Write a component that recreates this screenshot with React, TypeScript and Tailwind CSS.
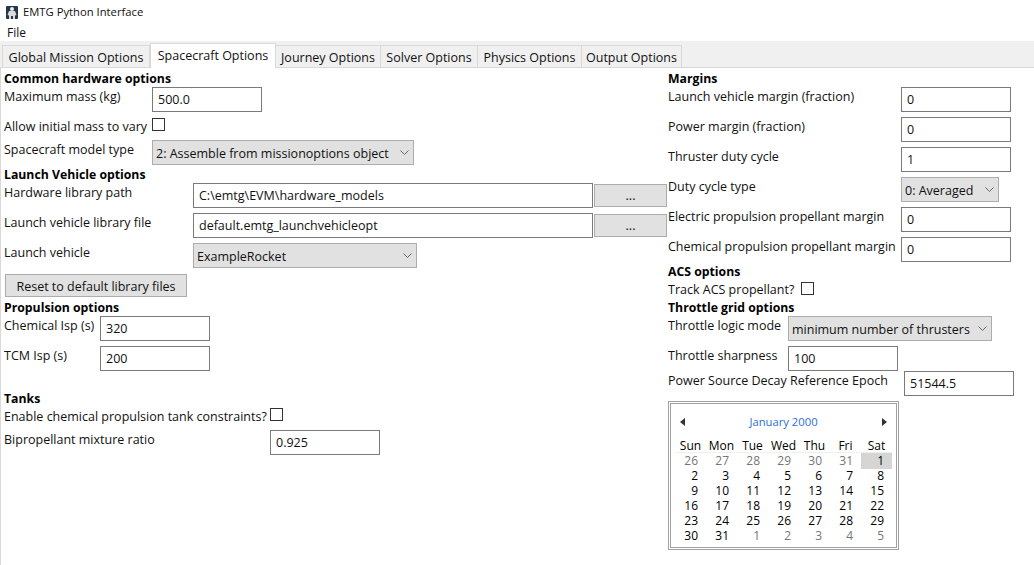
import React from 'react';

const font = "font-['Open_Sans','Noto_Sans',sans-serif]";

const tabs = [
  { name: 'Global Mission Options', width: 'w-[148px]' },
  { name: 'Spacecraft Options', width: 'w-[126px]' },
  { name: 'Journey Options', width: 'w-[105px]' },
  { name: 'Solver Options', width: 'w-[97px]' },
  { name: 'Physics Options', width: 'w-[104px]' },
  { name: 'Output Options', width: 'w-[100px]' },
];

const weeks = [
  ['26', '27', '28', '29', '30', '31', '1'],
  ['2', '3', '4', '5', '6', '7', '8'],
  ['9', '10', '11', '12', '13', '14', '15'],
  ['16', '17', '18', '19', '20', '21', '22'],
  ['23', '24', '25', '26', '27', '28', '29'],
  ['30', '31', '1', '2', '3', '4', '5'],
];

function Heading({ children }: { children: React.ReactNode }) {
  return <div className="h-[15px] leading-[15px] font-bold text-[12.25px] text-black whitespace-nowrap">{children}</div>;
}

function TextBox({ value, className }: { value: string; className: string }) {
  return (
    <div className={`h-[25px] border border-[#7a7a7a] bg-white pl-[5px] pt-[3px] leading-[18px] ${className}`}>{value}</div>
  );
}

function Select({ value, className }: { value: string; className: string }) {
  return (
    <div className={`h-[25px] border border-[#adadad] bg-[#e1e1e1] pl-[3px] pt-[4px] leading-[18px] flex justify-between ${className}`}>
      <span>{value}</span>
      <svg width="9" height="5" viewBox="0 0 9 5" className="mt-[5px] mr-[4px]" fill="none" stroke="#666" strokeWidth="1">
        <path d="M.5.5l4 4 4-4" />
      </svg>
    </div>
  );
}

function Dots() {
  return <div className="w-[73px] h-[23px] mt-[1px] ml-[1px] bg-[#e1e1e1] border border-[#adadad] text-center leading-[22px]">...</div>;
}

function Check({ className = '' }: { className?: string }) {
  return <div className={`w-[13px] h-[13px] border border-[#333] bg-white ${className}`} />;
}

function Row({ label, labelWidth, children, className = '', tight = false }: { label: string; labelWidth: string; children: React.ReactNode; className?: string; tight?: boolean }) {
  return (
    <div className={`flex items-start ${className}`}>
      <div className={`${labelWidth} ${tight ? '' : 'pt-[1px]'} shrink-0 leading-[18px] whitespace-nowrap`}>{label}</div>
      {children}
    </div>
  );
}

function Calendar() {
  return (
    <div className="w-[231px] h-[149px] border border-[#a0a0a0] p-[1px] bg-white text-[12px]">
      <div className="w-full h-full border border-[#a0a0a0] pl-[4px]">
        <div className="w-[217px] flex items-center justify-between h-[32px] pt-[5px]">
          <svg width="5" height="8" viewBox="0 0 5 8" className="ml-[5px] -mt-[1px]"><path d="M5 0v8L0 4z" fill="#333" /></svg>
          <span className="text-[#2a6fd6] text-[11.25px]">January 2000</span>
          <svg width="5" height="8" viewBox="0 0 5 8" className="mr-[5px] -mt-[1px]"><path d="M0 0v8l5-4z" fill="#333" /></svg>
        </div>
        <div className="grid grid-cols-7 w-[217px] h-[17px] border-b border-[#f0f0f0] leading-[20px] text-center text-black">
          {['Sun', 'Mon', 'Tue', 'Wed', 'Thu', 'Fri', 'Sat'].map((d) => (
            <div key={d}>{d}</div>
          ))}
        </div>
        <div className="w-[217px]">
          {weeks.map((w, i) => (
            <div key={i} className="grid grid-cols-7 h-[15px] leading-[16px]">
              {w.map((d, j) => {
                const muted = (i === 0 && j < 6) || (i === 5 && j > 1);
                const sel = i === 0 && j === 6;
                return (
                  <div key={j} className={`text-right pr-[8px] ${muted ? 'text-[#767676]' : 'text-black'} ${sel ? 'bg-[#d5d5d5]' : ''}`}>
                    {d}
                  </div>
                );
              })}
            </div>
          ))}
        </div>
      </div>
    </div>
  );
}

export default function App() {
  return (
    <div className={`${font} w-[1034px] h-[565px] bg-white text-[12.5px] text-[#111] overflow-hidden flex flex-col`}>
      <div className="h-[24px] flex items-center pl-[6px] gap-[5px] shrink-0">
        <svg width="12" height="13" viewBox="0 0 12 13">
          <rect width="12" height="13" rx="1" fill="#26354a" />
          <circle cx="6" cy="3" r="2" fill="#eeeeee" />
          <path d="M3 5h6l1.5 4-1.5.5V13H7V10H5v3H3V9.5L1.5 9z" fill="#dcdcdc" />
        </svg>
        <span className="text-[11.25px]">EMTG Python Interface</span>
      </div>
      <div className="h-[17px] pl-[7px] leading-[17px] text-[12px] shrink-0">File</div>
      <div className="h-[27px] flex items-end pl-[2px] shrink-0 bg-[#f0f0f0] border-b border-[#d9d9d9]">
        {tabs.map((t, i) =>
          i === 1 ? (
            <div key={t.name} className={`${t.width} h-[25px] -mb-[1px] border border-b-0 border-[#d9d9d9] bg-white pt-[2px] leading-[20px] text-center whitespace-nowrap relative z-10`}>{t.name}</div>
          ) : (
            <div key={t.name} className={`${t.width} h-[22px] border border-b-0 border-[#d9d9d9] ${i === 0 ? '' : 'border-l-0'} bg-[#f0f0f0] pt-[2px] leading-[20px] text-center whitespace-nowrap`}>{t.name}</div>
          ),
        )}
      </div>
      <div className="flex-1 flex border-l border-[#d9d9d9] pl-[3px]">
        <div className="w-[664px] shrink-0 pt-[3px]">
          <Heading>Common hardware options</Heading>
          <Row label="Maximum mass (kg)" labelWidth="w-[148px]" className="mt-[1px]"><TextBox value="500.0" className="w-[110px]" /></Row>
          <Row label="Allow initial mass to vary" labelWidth="w-[148px]" className="mt-[6px]" tight><Check /></Row>
          <Row label="Spacecraft model type" labelWidth="w-[148px]" className="mt-[4px]"><Select value="2: Assemble from missionoptions object" className="w-[262px]" /></Row>
          <div className="mt-[2px]"><Heading>Launch Vehicle options</Heading></div>
          <Row label="Hardware library path" labelWidth="w-[189px]" className="mt-[1px]">
            <TextBox value="C:\emtg\EVM\hardware_models" className="w-[400px]" />
            <Dots />
          </Row>
          <Row label="Launch vehicle library file" labelWidth="w-[189px]" className="mt-[5px]">
            <TextBox value="default.emtg_launchvehicleopt" className="w-[400px]" />
            <Dots />
          </Row>
          <Row label="Launch vehicle" labelWidth="w-[189px]" className="mt-[5px]"><Select value="ExampleRocket" className="w-[224px]" /></Row>
          <div className="mt-[6px] ml-[1px] w-[182px] h-[23px] bg-[#e1e1e1] border border-[#adadad] text-center leading-[23px]">Reset to default library files</div>
          <div className="mt-[3px]"><Heading>Propulsion options</Heading></div>
          <Row label="Chemical Isp (s)" labelWidth="w-[96px]" className="mt-[1px]"><TextBox value="320" className="w-[110px]" /></Row>
          <Row label="TCM Isp (s)" labelWidth="w-[96px]" className="mt-[5px]"><TextBox value="200" className="w-[110px]" /></Row>
          <div className="mt-[20px]"><Heading>Tanks</Heading></div>
          <Row label="Enable chemical propulsion tank constraints?" labelWidth="w-[266px]" className="mt-[2px]" tight><Check /></Row>
          <Row label="Bipropellant mixture ratio" labelWidth="w-[266px]" className="mt-[4px]"><TextBox value="0.925" className="w-[110px]" /></Row>
        </div>
        <div className="flex-1 pt-[3px]">
          <Heading>Margins</Heading>
          <Row label="Launch vehicle margin (fraction)" labelWidth="w-[233px]" className="mt-[1px]"><TextBox value="0" className="w-[110px]" /></Row>
          <Row label="Power margin (fraction)" labelWidth="w-[233px]" className="mt-[5px]"><TextBox value="0" className="w-[110px]" /></Row>
          <Row label="Thruster duty cycle" labelWidth="w-[233px]" className="mt-[5px]"><TextBox value="1" className="w-[110px]" /></Row>
          <Row label="Duty cycle type" labelWidth="w-[233px]" className="mt-[5px]"><Select value="0: Averaged" className="w-[98px]" /></Row>
          <Row label="Electric propulsion propellant margin" labelWidth="w-[233px]" className="mt-[5px]"><TextBox value="0" className="w-[110px]" /></Row>
          <Row label="Chemical propulsion propellant margin" labelWidth="w-[233px]" className="mt-[5px]"><TextBox value="0" className="w-[110px]" /></Row>
          <div className="mt-[2px]"><Heading>ACS options</Heading></div>
          <Row label="Track ACS propellant?" labelWidth="w-[133px]" className="mt-[2px]" tight><Check className="mt-[1px]" /></Row>
          <div className="mt-[1px]"><Heading>Throttle grid options</Heading></div>
          <Row label="Throttle logic mode" labelWidth="w-[120px]" className="mt-[1px]"><Select value="minimum number of thrusters" className="w-[204px]" /></Row>
          <Row label="Throttle sharpness" labelWidth="w-[120px]" className="mt-[5px]"><TextBox value="100" className="w-[110px]" /></Row>
          <Row label="Power Source Decay Reference Epoch" labelWidth="w-[236px]"><TextBox value="51544.5" className="w-[110px]" /></Row>
          <div className="mt-[5px]"><Calendar /></div>
        </div>
      </div>
    </div>
  );
}
